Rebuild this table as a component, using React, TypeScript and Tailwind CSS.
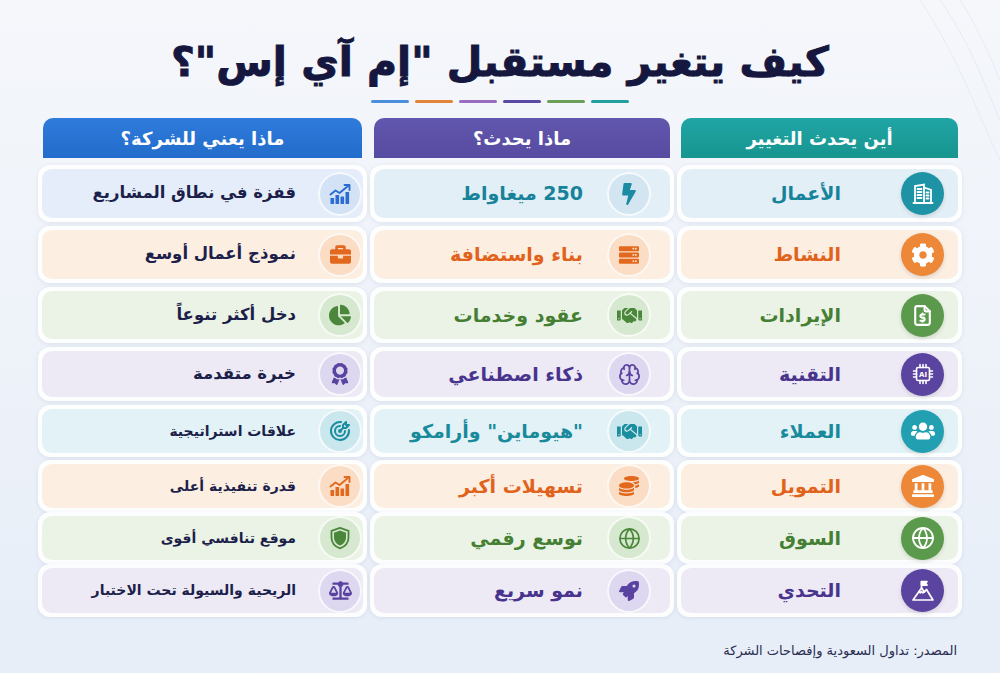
import type { ReactNode } from "react";
import {
  FaBolt,
  FaServer,
  FaHandshake,
  FaCoins,
  FaRocket,
  FaBriefcase,
  FaChartPie,
  FaAward,
  FaBalanceScale,
  FaUsers,
  FaLandmark,
  FaCog,
} from "react-icons/fa";
import { TbFileDollar, TbTargetArrow } from "react-icons/tb";
import { Globe, Brain } from "lucide-react";

// small hand-drawn icons that the packages don't have in the right shape
function BuildingIcon() {
  return (
    <svg viewBox="0 0 24 24" className="h-[24px] w-[24px]" fill="none" stroke="currentColor" strokeWidth="1.8" strokeLinecap="round">
      <path d="M4 21V4l9 -1.5V21" />
      <path d="M13 5.5l7 2.5V21" />
      <path d="M2.5 21h19" />
      <path d="M6.5 7h4M6.5 10h4M6.5 13h4M6.5 16h4" />
      <path d="M15.5 10.5h2M15.5 13.5h2M15.5 16.5h2" />
    </svg>
  );
}

function ChipIcon() {
  return (
    <svg viewBox="0 0 24 24" className="h-[24px] w-[24px]" fill="none" stroke="currentColor" strokeWidth="1.6" strokeLinecap="round">
      <rect x="5.5" y="5.5" width="13" height="13" rx="1.5" />
      <path d="M9 2.5v3M12 2.5v3M15 2.5v3M9 18.5v3M12 18.5v3M15 18.5v3M2.5 9h3M2.5 12h3M2.5 15h3M18.5 9h3M18.5 12h3M18.5 15h3" />
      <text x="12" y="14.6" textAnchor="middle" fontSize="7" fontWeight="700" fill="currentColor" stroke="none" fontFamily="DejaVu Sans, sans-serif">
        AI
      </text>
    </svg>
  );
}

function PeakIcon() {
  return (
    <svg viewBox="0 0 24 24" className="h-[24px] w-[24px]" fill="none" stroke="currentColor" strokeWidth="1.7" strokeLinejoin="round" strokeLinecap="round">
      <path d="M2 21L10.5 9l3 4 2-2.5L22 21z" />
      <path d="M8 12.5l1.3 1.3 1.2-1.3 1.4 1.4 1.2-1" />
      <path d="M10.5 9V2.5" />
      <path d="M10.5 2.5h5.5l-1.4 1.8 1.4 1.8h-5.5z" fill="currentColor" />
    </svg>
  );
}

function GrowthIcon() {
  return (
    <svg viewBox="0 0 24 24" className="h-[24px] w-[24px]" fill="currentColor">
      <rect x="2.5" y="16" width="3.6" height="6" rx="0.4" />
      <rect x="7.5" y="13" width="3.6" height="9" rx="0.4" />
      <rect x="12.5" y="14.5" width="3.6" height="7.5" rx="0.4" />
      <rect x="17.5" y="10" width="3.6" height="12" rx="0.4" />
      <path d="M2.5 12.5l5-4 4 2.5 8.5-7" fill="none" stroke="currentColor" strokeWidth="1.9" strokeLinecap="round" strokeLinejoin="round" />
      <path d="M16.5 3h5v5" fill="none" stroke="currentColor" strokeWidth="1.9" strokeLinecap="round" strokeLinejoin="round" />
    </svg>
  );
}

function ShieldIcon() {
  return (
    <svg viewBox="0 0 24 24" className="h-[24px] w-[24px]">
      <path d="M12 1.8l8.5 3v6.4c0 5.3-3.7 9.4-8.5 11.1-4.8-1.7-8.5-5.8-8.5-11.1V4.8z" fill="none" stroke="currentColor" strokeWidth="1.8" strokeLinejoin="round" />
      <path d="M12 4.6l6 2.1v4.6c0 3.9-2.6 7-6 8.3-3.4-1.3-6-4.4-6-8.3V6.7z" fill="currentColor" />
    </svg>
  );
}

type Tone = {
  cell: string;
  text: string;
  solid: string;
  soft: string;
  glyph: string;
};

const orange: Tone = {
  cell: "bg-[#fdeee2]",
  text: "text-[#e0621b]",
  solid: "bg-[#ec8838]",
  soft: "bg-[#fbdcc4]",
  glyph: "text-[#e2681e]",
};
const green: Tone = {
  cell: "bg-[#ebf3e6]",
  text: "text-[#457f34]",
  solid: "bg-[#5b994c]",
  soft: "bg-[#d6e8cf]",
  glyph: "text-[#4b873a]",
};
const purple: Tone = {
  cell: "bg-[#edeaf6]",
  text: "text-[#48338d]",
  solid: "bg-[#5b43a0]",
  soft: "bg-[#ddd8ef]",
  glyph: "text-[#5a43a0]",
};
const teal: Tone = {
  cell: "bg-[#e3f2f6]",
  text: "text-[#188a9b]",
  solid: "bg-[#22a0b1]",
  soft: "bg-[#cbe7ee]",
  glyph: "text-[#1a8d9f]",
};
const tealBlue: Tone = {
  cell: "bg-[#e3eff7]",
  text: "text-[#17839a]",
  solid: "bg-[#1d93a5]",
  soft: "bg-[#d2e5f0]",
  glyph: "text-[#1b8aa3]",
};
const blue: Tone = {
  cell: "bg-[#e4edf9]",
  text: "text-[#1c1f4a]",
  solid: "bg-[#2a6cd1]",
  soft: "bg-[#d4e2f6]",
  glyph: "text-[#2a6cd1]",
};

type Cell = { label: string; icon: ReactNode; small?: boolean };
type Row = {
  h: string;
  where: Cell;
  what: Cell;
  means: Cell;
  tone: Tone;
  whatTone?: Tone;
  meansTone?: Tone;
};

const rows: Row[] = [
  {
    h: "h-[57px]",
    tone: tealBlue,
    meansTone: blue,
    where: { label: "الأعمال", icon: <BuildingIcon /> },
    what: { label: "250 ميغاواط", icon: <FaBolt size={22} /> },
    means: { label: "قفزة في نطاق المشاريع", icon: <GrowthIcon /> },
  },
  {
    h: "h-[57px]",
    tone: orange,
    where: { label: "النشاط", icon: <FaCog size={24} /> },
    what: { label: "بناء واستضافة", icon: <FaServer size={20} /> },
    means: { label: "نموذج أعمال أوسع", icon: <FaBriefcase size={21} /> },
  },
  {
    h: "h-[56px]",
    tone: green,
    where: { label: "الإيرادات", icon: <TbFileDollar size={25} /> },
    what: { label: "عقود وخدمات", icon: <FaHandshake size={25} /> },
    means: { label: "دخل أكثر تنوعاً", icon: <FaChartPie size={22} /> },
  },
  {
    h: "h-[54px]",
    tone: purple,
    where: { label: "التقنية", icon: <ChipIcon /> },
    what: { label: "ذكاء اصطناعي", icon: <Brain size={23} strokeWidth={1.8} /> },
    means: { label: "خبرة متقدمة", icon: <FaAward size={22} /> },
  },
  {
    h: "h-[51px]",
    tone: teal,
    where: { label: "العملاء", icon: <FaUsers size={24} /> },
    what: { label: '"هيوماين" وأرامكو', icon: <FaHandshake size={25} /> },
    means: { label: "علاقات استراتيجية", icon: <TbTargetArrow size={24} />, small: true },
  },
  {
    h: "h-[48px]",
    tone: orange,
    where: { label: "التمويل", icon: <FaLandmark size={22} /> },
    what: { label: "تسهيلات أكبر", icon: <FaCoins size={20} /> },
    means: { label: "قدرة تنفيذية أعلى", icon: <GrowthIcon />, small: true },
  },
  {
    h: "h-[48px]",
    tone: green,
    where: { label: "السوق", icon: <Globe size={24} strokeWidth={1.8} /> },
    what: { label: "توسع رقمي", icon: <Globe size={23} strokeWidth={1.8} /> },
    means: { label: "موقع تنافسي أقوى", icon: <ShieldIcon />, small: true },
  },
  {
    h: "h-[53px]",
    tone: purple,
    where: { label: "التحدي", icon: <PeakIcon /> },
    what: { label: "نمو سريع", icon: <FaRocket size={20} /> },
    means: { label: "الريحية والسيولة تحت الاختبار", icon: <FaBalanceScale size={23} />, small: true },
  },
];

const bars = ["bg-[#4a8fdc]", "bg-[#e2843a]", "bg-[#9a6cc0]", "bg-[#5a48a2]", "bg-[#6a9f58]", "bg-[#229f9f]"];

export default function App() {
  return (
    <div
      dir="rtl"
      className="relative h-[673px] w-[1000px] overflow-hidden bg-gradient-to-b from-[#f5f7fb] via-[#eef2f9] to-[#e7eef8] text-[#1c1f4a]"
      style={{ fontFamily: '"DejaVu Sans", "Noto Sans", sans-serif' }}
    >
      <svg className="pointer-events-none absolute right-0 top-0 h-[220px] w-[120px] opacity-60" viewBox="0 0 120 220" fill="none" stroke="#dfe7f3" strokeWidth="1">
        <path d="M40 0C80 60 100 120 120 160" />
        <path d="M60 0C95 50 110 100 120 120" />
        <path d="M80 0C105 40 115 70 120 80" />
      </svg>

      <h1 className="pt-[30px] text-center text-[41px] font-bold leading-[64px] text-[#15173f] [-webkit-text-stroke:1px_#15173f]">
        كيف يتغير مستقبل "إم آي إس"؟
      </h1>

      <div dir="ltr" className="mt-[6px] flex justify-center gap-[6px]">
        {bars.map((b) => (
          <div key={b} className={`h-[3px] w-[38px] rounded-full ${b}`} />
        ))}
      </div>

      <div className="mx-auto mt-[15px] w-[924px]">
        <div className="grid grid-cols-[285px_304px_1fr] gap-x-[3px] px-0">
          <div className="px-[4px]">
            <div className="flex h-[40px] items-center justify-center rounded-t-[10px] bg-gradient-to-b from-[#20a5a5] to-[#17958f] text-[18px] font-bold text-white">
              أين يحدث التغيير
            </div>
          </div>
          <div className="px-[4px]">
            <div className="flex h-[40px] items-center justify-center rounded-t-[10px] bg-gradient-to-b from-[#6257ae] to-[#564ba0] text-[18px] font-bold text-white">
              ماذا يحدث؟
            </div>
          </div>
          <div className="px-[5px]">
            <div className="flex h-[40px] items-center justify-center rounded-t-[10px] bg-gradient-to-b from-[#2f7bdb] to-[#226ccb] text-[18px] font-bold text-white">
              ماذا يعني للشركة؟
            </div>
          </div>
        </div>

        <div className="mt-[7px] flex flex-col gap-[4px]">
          {rows.map((r) => {
            const mid = r.whatTone ?? r.tone;
            const left = r.meansTone ?? r.tone;
            return (
              <div key={r.where.label} className={`grid grid-cols-[285px_304px_1fr] gap-x-[3px] ${r.h}`}>
                <div className="rounded-[12px] bg-white/90 p-[4px] shadow-[0_1px_4px_rgba(60,80,130,0.10)]">
                  <div className={`flex h-full items-center gap-[60px] rounded-[10px] pr-[14px] ${r.tone.cell}`}>
                    <div className={`flex h-[43px] w-[43px] shrink-0 items-center justify-center rounded-full text-white shadow-[0_2px_4px_rgba(0,0,0,0.12)] ${r.tone.solid}`}>
                      {r.where.icon}
                    </div>
                    <span className={`text-[19px] font-bold ${r.tone.text}`}>{r.where.label}</span>
                  </div>
                </div>

                <div className="rounded-[12px] bg-white/90 p-[4px] shadow-[0_1px_4px_rgba(60,80,130,0.10)]">
                  <div className={`flex h-full items-center gap-[24px] rounded-[10px] pr-[19px] ${mid.cell}`}>
                    <div className={`flex h-[44px] w-[44px] shrink-0 items-center justify-center rounded-full border-2 border-white/80 ${mid.soft} ${mid.glyph}`}>
                      {r.what.icon}
                    </div>
                    <span className={`text-[19px] font-bold ${mid.text}`}>{r.what.label}</span>
                  </div>
                </div>

                <div className="rounded-[12px] bg-white/90 p-[4px] shadow-[0_1px_4px_rgba(60,80,130,0.10)]">
                  <div className={`flex h-full items-center gap-[22px] rounded-[10px] pr-[1px] ${left.cell}`}>
                    <div className={`flex h-[44px] w-[44px] shrink-0 items-center justify-center rounded-full border-2 border-white/80 ${left.soft} ${left.glyph}`}>
                      {r.means.icon}
                    </div>
                    <span className={`font-bold text-[#1c1f4a] ${r.means.small ? "text-[14px]" : "text-[16.5px]"}`}>
                      {r.means.label}
                    </span>
                  </div>
                </div>
              </div>
            );
          })}
        </div>

        <p className="mt-[24px] pr-[5px] text-[13px] text-[#2a2d52]">المصدر: تداول السعودية وإفصاحات الشركة</p>
      </div>
    </div>
  );
}
